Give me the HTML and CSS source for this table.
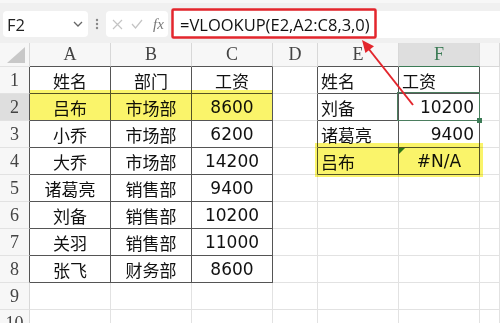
FILE: index.html
```html
<!DOCTYPE html>
<html>
<head>
<meta charset="utf-8">
<link rel="stylesheet" href="styles.css">
</head>
<body>
<div class="app">
  <div class="toolbar">
    <div class="namebox">
      <span class="nb-text">F2</span>
      <svg class="chev" width="10" height="6" viewBox="0 0 10 6"><polyline points="1,1 5,5 9,1" fill="none" stroke="#666" stroke-width="1.3"/></svg>
    </div>
    <svg class="dots" width="4" height="12" viewBox="0 0 4 12"><circle cx="2" cy="2" r="1.2" fill="#888"/><circle cx="2" cy="6" r="1.2" fill="#888"/><circle cx="2" cy="10" r="1.2" fill="#888"/></svg>
    <div class="fxbox">
      <svg width="11" height="11" viewBox="0 0 11 11"><path d="M1 1 L10 10 M10 1 L1 10" stroke="#c4c4c4" stroke-width="1.2" fill="none"/></svg>
      <svg width="12" height="10" viewBox="0 0 12 10"><path d="M1 5 L4.5 9 L11 1" stroke="#c4c4c4" stroke-width="1.2" fill="none"/></svg>
      <span class="fx">fx</span>
    </div>
    <div class="formula">=VLOOKUP(E2,A2:C8,3,0)</div>
  </div>
  <div class="grid">
    <div class="c corner"><svg width="20" height="18" viewBox="0 0 20 18"><polygon points="19,1 19,17 1,17" fill="#c8c8c8"/></svg></div>
    <div class="c ch tb">A</div><div class="c ch tb">B</div><div class="c ch tb">C</div><div class="c ch">D</div><div class="c ch tb">E</div><div class="c ch tb sel">F</div><div class="c ch"></div>

    <div class="c rh tr">1</div><div class="c t">姓名</div><div class="c t">部门</div><div class="c t">工资</div><div class="c tr"></div><div class="c t l">姓名</div><div class="c t l">工资</div><div class="c"></div>
    <div class="c rh tr rsel">2</div><div class="c t">吕布</div><div class="c t">市场部</div><div class="c t">8600</div><div class="c tr"></div><div class="c t l">刘备</div><div class="c t r active">10200</div><div class="c"></div>
    <div class="c rh tr">3</div><div class="c t">小乔</div><div class="c t">市场部</div><div class="c t">6200</div><div class="c tr"></div><div class="c t l">诸葛亮</div><div class="c t r">9400</div><div class="c"></div>
    <div class="c rh tr">4</div><div class="c t">大乔</div><div class="c t">市场部</div><div class="c t">14200</div><div class="c tr"></div><div class="c t l">吕布</div><div class="c t err">#N/A</div><div class="c"></div>
    <div class="c rh tr">5</div><div class="c t">诸葛亮</div><div class="c t">销售部</div><div class="c t">9400</div><div class="c"></div><div class="c"></div><div class="c"></div><div class="c"></div>
    <div class="c rh tr">6</div><div class="c t">刘备</div><div class="c t">销售部</div><div class="c t">10200</div><div class="c"></div><div class="c"></div><div class="c"></div><div class="c"></div>
    <div class="c rh tr">7</div><div class="c t">关羽</div><div class="c t">销售部</div><div class="c t">11000</div><div class="c"></div><div class="c"></div><div class="c"></div><div class="c"></div>
    <div class="c rh tr">8</div><div class="c t">张飞</div><div class="c t">财务部</div><div class="c t">8600</div><div class="c"></div><div class="c"></div><div class="c"></div><div class="c"></div>
    <div class="c rh">9</div><div class="c"></div><div class="c"></div><div class="c"></div><div class="c"></div><div class="c"></div><div class="c"></div><div class="c"></div>
    <div class="c rh">10</div><div class="c"></div><div class="c"></div><div class="c"></div><div class="c"></div><div class="c"></div><div class="c"></div><div class="c"></div>
  </div>
  <div class="hl hl1"></div>
  <div class="hl hl2"></div>
  <svg class="annot" width="500" height="323" viewBox="0 0 500 323">
    <rect x="172.5" y="9.5" width="203" height="28" rx="1" fill="none" stroke="#e3262d" stroke-width="2.5"/>
    <line x1="413" y1="105" x2="368" y2="48" stroke="#e3262d" stroke-width="2"/>
    <polygon points="362,40 365.4,53 374,46.2" fill="#e3262d"/>
  </svg>
</div>
</body>
</html>
```
FILE: styles.css
```css
html, body {
  margin: 0;
  padding: 0;
  background: #fff;
}
.app {
  position: relative;
  width: 500px;
  height: 323px;
  overflow: hidden;
  font-family: "DejaVu Sans", "Noto Sans CJK SC", sans-serif;
}
.toolbar {
  height: 43px;
  background: #f0f0f0;
  border-top: 3px solid #f7f7f7;
  box-sizing: border-box;
  display: flex;
  align-items: flex-start;
  padding-top: 8px;
}
.namebox {
  margin-left: 3px;
  width: 85px;
  height: 26px;
  background: #fff;
  border-radius: 4px;
  display: flex;
  align-items: center;
  justify-content: space-between;
  padding: 0 5px 0 4px;
  box-sizing: border-box;
  font-family: "Open Sans", "Liberation Sans", sans-serif;
  font-size: 16.5px;
  color: #222;
}
.dots {
  margin: 7px 0 0 7px;
}
.fxbox {
  margin-left: 7px;
  width: 62px;
  height: 26px;
  background: #fff;
  border-radius: 4px;
  display: flex;
  align-items: center;
  gap: 8px;
  padding-left: 6px;
  box-sizing: border-box;
}
.fx {
  font-family: "Liberation Serif", serif;
  font-style: italic;
  font-size: 15px;
  color: #777;
  margin-left: 2px;
}
.formula {
  margin-left: 5px;
  flex: 1;
  height: 27px;
  background: #fff;
  display: flex;
  align-items: center;
  padding-left: 7px;
  font-family: "Open Sans", "Liberation Sans", sans-serif;
  font-size: 16.5px;
  color: #111;
}
.grid {
  display: grid;
  grid-template-columns: 30px 81px 81px 81px 45px 81px 81px 1fr;
  grid-template-rows: 24px repeat(10, 27px);
}
.c {
  box-sizing: border-box;
  border-right: 1px solid #e2e2e2;
  border-bottom: 1px solid #e2e2e2;
  display: flex;
  align-items: center;
  justify-content: center;
  font-size: 17px;
  color: #111;
  position: relative;
  white-space: nowrap;
}
.corner {
  background: #f7f7f7;
  border-right-color: #d8d8d8;
  align-items: flex-end;
  justify-content: flex-end;
  padding: 0 3px 2px 0;
}
.ch {
  background: #f7f7f7;
  font-family: "Liberation Serif", serif;
  font-size: 18px;
  color: #444;
  border-right-color: #d8d8d8;
  border-bottom-color: #d8d8d8;
}
.ch.tb {
  border-bottom-color: #555;
}
.ch.sel {
  background: #dedede;
  color: #3b7b55;
  border-bottom: 1px solid #3b7b55;
}
.rh {
  background: #f7f7f7;
  font-family: "Liberation Serif", serif;
  font-size: 18px;
  color: #444;
  border-right-color: #d8d8d8;
}
.rh.rsel {
  background: #dedede;
}
.tr {
  border-right-color: #555;
}
.t {
  border-right-color: #555;
  border-bottom-color: #555;
}
.l {
  justify-content: flex-start;
  padding-left: 3px;
}
.r {
  justify-content: flex-end;
  padding-right: 5px;
}
.active::after {
  content: "";
  position: absolute;
  left: -2px;
  top: -2px;
  right: -1px;
  bottom: -1px;
  border: 1.5px solid #4b7d5e;
}
.active::before {
  content: "";
  position: absolute;
  right: -3px;
  bottom: -3px;
  width: 5px;
  height: 5px;
  background: #3b7b55;
  z-index: 2;
}
.err::before {
  content: "";
  position: absolute;
  left: 0;
  top: 0;
  border-top: 6px solid #2e7d32;
  border-right: 6px solid transparent;
}
.hl {
  position: absolute;
  background: #faf46a;
  mix-blend-mode: multiply;
}
.hl1 {
  left: 30px;
  top: 90px;
  width: 242px;
  height: 30px;
}
.hl2 {
  left: 315px;
  top: 143px;
  width: 168px;
  height: 34px;
}
.annot {
  position: absolute;
  left: 0;
  top: 0;
}
```
